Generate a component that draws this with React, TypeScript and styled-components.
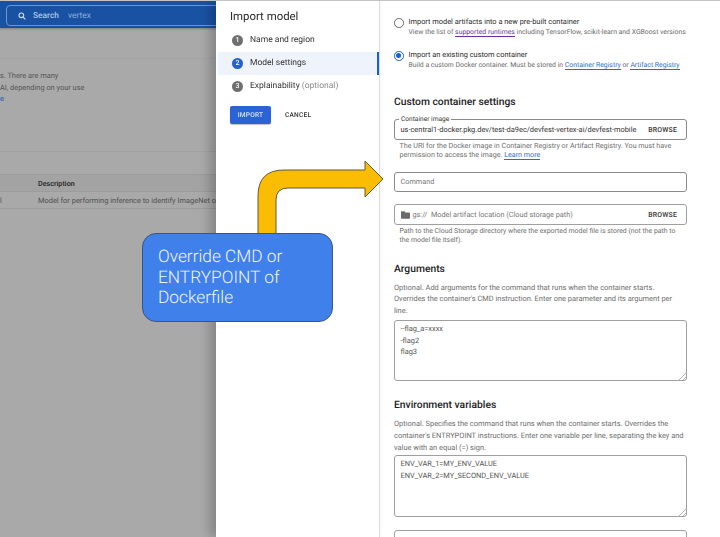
import React from "react";
import styled, { createGlobalStyle } from "styled-components";

const Global = createGlobalStyle`
  html, body { margin: 0; padding: 0; background: #fff; }
  body { font-family: Roboto, "Liberation Sans", sans-serif; overflow: hidden; text-rendering: geometricPrecision; }
  * { box-sizing: border-box; }
`;

const Page = styled.div`
  position: relative;
  width: 720px;
  height: 537px;
  overflow: hidden;
  display: grid;
  grid-template-columns: 216px 164px 1fr;
  border-top: 1px solid #c4c4c4;
  filter: blur(0.45px);
`;

const Backdrop = styled.div`
  background: #a9a9a9;
  overflow: hidden;
  display: flex;
  flex-direction: column;
`;

const TopBar = styled.div`
  height: 27px;
  background: #1a52a3;
  padding: 4px 0 0 6px;
  flex: none;
  box-shadow: 0 1px 2px rgba(0,0,0,.25);
`;

const SearchBox = styled.div`
  width: 260px;
  height: 21px;
  border: 1px solid #6f96cc;
  border-radius: 4px;
  display: flex;
  align-items: center;
  padding-left: 11px;
  gap: 7px;
  color: #a9c4e6;
  font-size: 8.4px;
  b { font-weight: 500; margin-right: 2px; }
  span { color: #8fb0dc; }
`;

const Rule = styled.div<{ $top: number; $color: string }>`
  height: 1px;
  background: ${p => p.$color};
  margin-top: ${p => p.$top}px;
  flex: none;
`;

const Info = styled.div<{ $top: number }>`
  font-size: 7.4px;
  color: #555;
  line-height: 11.7px;
  margin-top: ${p => p.$top}px;
  white-space: nowrap;
  span { color: #1b56a6; }
`;

const TableHead = styled.div`
  height: 18px;
  margin-top: 22px;
  background: #a3a3a3;
  border-top: 1px solid #9c9c9c;
  border-bottom: 1px solid #9c9c9c;
  padding-left: 38px;
  display: flex;
  align-items: center;
  font-size: 7.2px;
  font-weight: 500;
  color: #222;
`;

const TableRow = styled.div`
  height: 17px;
  border-bottom: 1px solid #9c9c9c;
  display: flex;
  align-items: center;
  font-size: 7.45px;
  color: #505050;
  white-space: nowrap;
  i { width: 38px; font-style: normal; flex: none; }
`;

const Stepper = styled.div`
  background: #fff;
  border-right: 1px solid #dcdcdc;
  box-shadow: -6px 0 10px rgba(0,0,0,.22);
  padding-top: 7px;
  position: relative;
`;

const DrawerTitle = styled.div`
  font-size: 11.4px;
  color: #2a2a2a;
  padding-left: 14px;
  height: 20.7px;
  line-height: 17px;
`;

const Step = styled.div<{ $active?: boolean }>`
  height: 23px;
  margin-left: 2px;
  padding-left: 14px;
  display: flex;
  align-items: center;
  gap: 7px;
  font-size: 8.5px;
  color: #333;
  background: ${p => (p.$active ? "#eef3fc" : "transparent")};
  border-right: ${p => (p.$active ? "2px solid #1a5fd0" : "none")};
  em { font-style: normal; color: #8a8a8a; }
`;

const StepDot = styled.span<{ $active?: boolean }>`
  width: 11px;
  height: 11px;
  border-radius: 50%;
  background: ${p => (p.$active ? "#2360d0" : "#6f6f6f")};
  color: #fff;
  font-size: 7px;
  font-weight: 500;
  display: flex;
  align-items: center;
  justify-content: center;
  flex: none;
`;

const Actions = styled.div`
  display: flex;
  align-items: center;
  padding: 8.3px 0 0 14px;
  gap: 14px;
`;

const ImportButton = styled.div`
  width: 41px;
  height: 18px;
  background: #2a63d4;
  color: #d6e2f8;
  border-radius: 2px;
  font-size: 6.6px;
  font-weight: 500;
  letter-spacing: .2px;
  display: flex;
  align-items: center;
  justify-content: center;
  box-shadow: 0 1px 1px rgba(0,0,0,.25);
`;

const CancelText = styled.div`
  font-size: 6.6px;
  font-weight: 500;
  letter-spacing: .2px;
  color: #333;
`;

const Form = styled.div`
  background: #fff;
  padding: 16px 0 0 14px;
  width: 340px;
  overflow: hidden;
`;

const RadioRow = styled.div<{ $top?: number }>`
  display: flex;
  gap: 5px;
  margin-top: ${p => p.$top ?? 0}px;
`;

const Radio = styled.span<{ $on?: boolean }>`
  width: 9.5px;
  height: 9.5px;
  margin-top: 1px;
  border-radius: 50%;
  border: 1px solid ${p => (p.$on ? "#1a5fd0" : "#666")};
  flex: none;
  display: flex;
  align-items: center;
  justify-content: center;
  &::after {
    content: "";
    width: 5px;
    height: 5px;
    border-radius: 50%;
    background: ${p => (p.$on ? "#1a5fd0" : "transparent")};
  }
`;

const RadioTitle = styled.div`
  font-size: 7.4px;
  line-height: 10px;
  color: #2b2b2b;
`;

const RadioHint = styled.div`
  font-size: 6.85px;
  line-height: 10px;
  color: #6a6a6a;
  white-space: nowrap;
`;

const Link = styled.span<{ $visited?: boolean }>`
  color: ${p => (p.$visited ? "#6a2fa0" : "#2f6bc4")};
  border-bottom: 1px solid ${p => (p.$visited ? "#6a2fa0" : "#2f6bc4")};
`;

const Heading = styled.div<{ $top: number }>`
  font-size: 10.3px;
  font-weight: 500;
  line-height: 14px;
  color: #222;
  margin-top: ${p => p.$top}px;
`;

const Field = styled.div<{ $top: number; $h: number; $strong?: boolean }>`
  position: relative;
  width: 293px;
  height: ${p => p.$h}px;
  margin-top: ${p => p.$top}px;
  border: 1px solid ${p => (p.$strong ? "#8a8a8a" : "#a0a0a0")};
  border-radius: 3px;
  padding: 0 9px 0 5.5px;
  display: flex;
  align-items: center;
  justify-content: space-between;
  font-size: 7.43px;
  color: #333;
  white-space: nowrap;
`;

const FloatLabel = styled.span`
  position: absolute;
  left: 4px;
  top: -5px;
  padding: 0 2px;
  background: #fff;
  font-size: 6.6px;
  line-height: 8px;
  color: #333;
`;

const Placeholder = styled.span`
  color: #777;
  display: flex;
  align-items: center;
  gap: 3px;
  font-size: 7.3px;
`;

const Browse = styled.span`
  font-size: 6.9px;
  font-weight: 500;
  letter-spacing: .2px;
  color: #333;
`;

const FieldHelp = styled.div<{ $top: number; $size: number }>`
  font-size: ${p => p.$size}px;
  line-height: 9.4px;
  color: #6e6e6e;
  width: 293px;
  padding-left: 5.5px;
  margin-top: ${p => p.$top}px;
  white-space: nowrap;
`;

const Desc = styled.div<{ $top: number }>`
  font-size: 7.45px;
  line-height: 11.6px;
  color: #6e6e6e;
  margin-top: ${p => p.$top}px;
  white-space: nowrap;
`;

const Area = styled.textarea<{ $top: number; $h: number }>`
  display: block;
  width: 293px;
  height: ${p => p.$h}px;
  margin-top: ${p => p.$top}px;
  border: 1px solid #a0a0a0;
  border-radius: 3px;
  padding: 2px 5.5px;
  font-family: Roboto, "Liberation Sans", sans-serif;
  font-size: 7.4px;
  line-height: 11.5px;
  color: #555;
  outline: none;
  text-rendering: geometricPrecision;
  &::-webkit-resizer {
    background: linear-gradient(
      135deg,
      transparent 74%,
      #b5b5b5 74%,
      #b5b5b5 79%,
      transparent 79%,
      transparent 87%,
      #b5b5b5 87%,
      #b5b5b5 92%,
      transparent 92%
    );
  }
`;

const Arrow = styled.svg`
  position: absolute;
  left: 0;
  top: -1px;
  width: 720px;
  height: 537px;
  pointer-events: none;
`;

const Callout = styled.div`
  position: absolute;
  left: 142px;
  top: 232px;
  width: 191px;
  height: 89px;
  background: #4080ea;
  border: 1px solid #3d5578;
  border-radius: 14px;
  padding: 13px 0 0 15px;
  color: #f0f5fe;
  font-family: Roboto, "Open Sans", sans-serif;
  font-size: 17.3px;
  font-weight: 300;
  line-height: 20.6px;
`;

const Folder = () => (
  <svg width="9" height="8" viewBox="0 0 24 20" fill="#6b6b6b">
    <path d="M9 0H2C.9 0 0 .9 0 2v16c0 1.1.9 2 2 2h20c1.1 0 2-.9 2-2V5c0-1.1-.9-2-2-2H12z" />
  </svg>
);

export default function App() {
  return (
    <>
      <Global />
      <Page>
        <Backdrop>
          <TopBar>
            <SearchBox>
              <svg width="8" height="8" viewBox="0 0 24 24" fill="none" stroke="#c7d8ee" strokeWidth="3.4">
                <circle cx="10" cy="10" r="7" />
                <path d="M15 15l7 7" />
              </svg>
              <b>Search</b>
              <span>vertex</span>
            </SearchBox>
          </TopBar>
          <Rule $top={30} $color="#a4a4a4" />
          <Info $top={11}>
            s. There are many
            <br />
            AI, depending on your use
            <br />
            <span>e</span>
          </Info>
          <Rule $top={46} $color="#a0a0a0" />
          <TableHead>Description</TableHead>
          <TableRow>
            <i>l</i>Model for performing inference to identify ImageNet o
          </TableRow>
        </Backdrop>

        <Stepper>
          <DrawerTitle>Import model</DrawerTitle>
          <Step>
            <StepDot>1</StepDot>Name and region
          </Step>
          <Step $active>
            <StepDot $active>2</StepDot>Model settings
          </Step>
          <Step>
            <StepDot>3</StepDot>
            <span>
              Explainability <em>(optional)</em>
            </span>
          </Step>
          <Actions>
            <ImportButton>IMPORT</ImportButton>
            <CancelText>CANCEL</CancelText>
          </Actions>
        </Stepper>

        <Form>
          <RadioRow>
            <Radio />
            <div>
              <RadioTitle>Import model artifacts into a new pre-built container</RadioTitle>
              <RadioHint>
                View the list of <Link $visited>supported runtimes</Link> including TensorFlow, scikit-learn and XGBoost versions
              </RadioHint>
            </div>
          </RadioRow>
          <RadioRow $top={13}>
            <Radio $on />
            <div>
              <RadioTitle>Import an existing custom container</RadioTitle>
              <RadioHint>
                Build a custom Docker container. Must be stored in <Link>Container Registry</Link> or <Link>Artifact Registry</Link>
              </RadioHint>
            </div>
          </RadioRow>
          <Heading $top={25}>Custom container settings</Heading>
          <Field $top={10} $h={21} $strong>
            <FloatLabel>Container image</FloatLabel>
            <span>us-central1-docker.pkg.dev/test-da9ec/devfest-vertex-ai/devfest-mobile</span>
            <Browse>BROWSE</Browse>
          </Field>
          <FieldHelp $top={1} $size={7.15}>
            The URI for the Docker image in Container Registry or Artifact Registry. You must have
            <br />
            permission to access the image. <Link>Learn more</Link>
          </FieldHelp>
          <Field $top={12} $h={20} $strong>
            <Placeholder>Command</Placeholder>
          </Field>
          <Field $top={12.4} $h={21}>
            <Placeholder>
              <Folder /> gs:// &nbsp;Model artifact location (Cloud storage path)
            </Placeholder>
            <Browse>BROWSE</Browse>
          </Field>
          <FieldHelp $top={1.6} $size={6.9}>
            Path to the Cloud Storage directory where the exported model file is stored (not the path to
            <br />
            the model file itself).
          </FieldHelp>
          <Heading $top={16}>Arguments</Heading>
          <Desc $top={6}>
            Optional. Add arguments for the command that runs when the container starts.
            <br />
            Overrides the container's CMD instruction. Enter one parameter and its argument per
            <br />
            line.
          </Desc>
          <Area $top={4} $h={61} readOnly defaultValue={"--flag_a=xxxx\n-flag2\nflag3"} />
          <Heading $top={17}>Environment variables</Heading>
          <Desc $top={6}>
            Optional. Specifies the command that runs when the container starts. Overrides the
            <br />
            container's ENTRYPOINT instructions. Enter one variable per line, separating the key and
            <br />
            value with an equal (=) sign.
          </Desc>
          <Area $top={2} $h={62} readOnly defaultValue={"ENV_VAR_1=MY_ENV_VALUE\nENV_VAR_2=MY_SECOND_ENV_VALUE"} />
          <Area $top={13} $h={40} readOnly />
        </Form>

        <Arrow viewBox="0 0 720 537">
          <path
            d="M258 234V196Q258 170 284 170H365V161L383 179L365 197V188H288Q276 188 276 200V234Z"
            fill="#fbbc04"
            stroke="#5e5a3c"
            strokeWidth="1"
          />
        </Arrow>
        <Callout>
          Override CMD or
          <br />
          ENTRYPOINT of
          <br />
          Dockerfile
        </Callout>
      </Page>
    </>
  );
}
